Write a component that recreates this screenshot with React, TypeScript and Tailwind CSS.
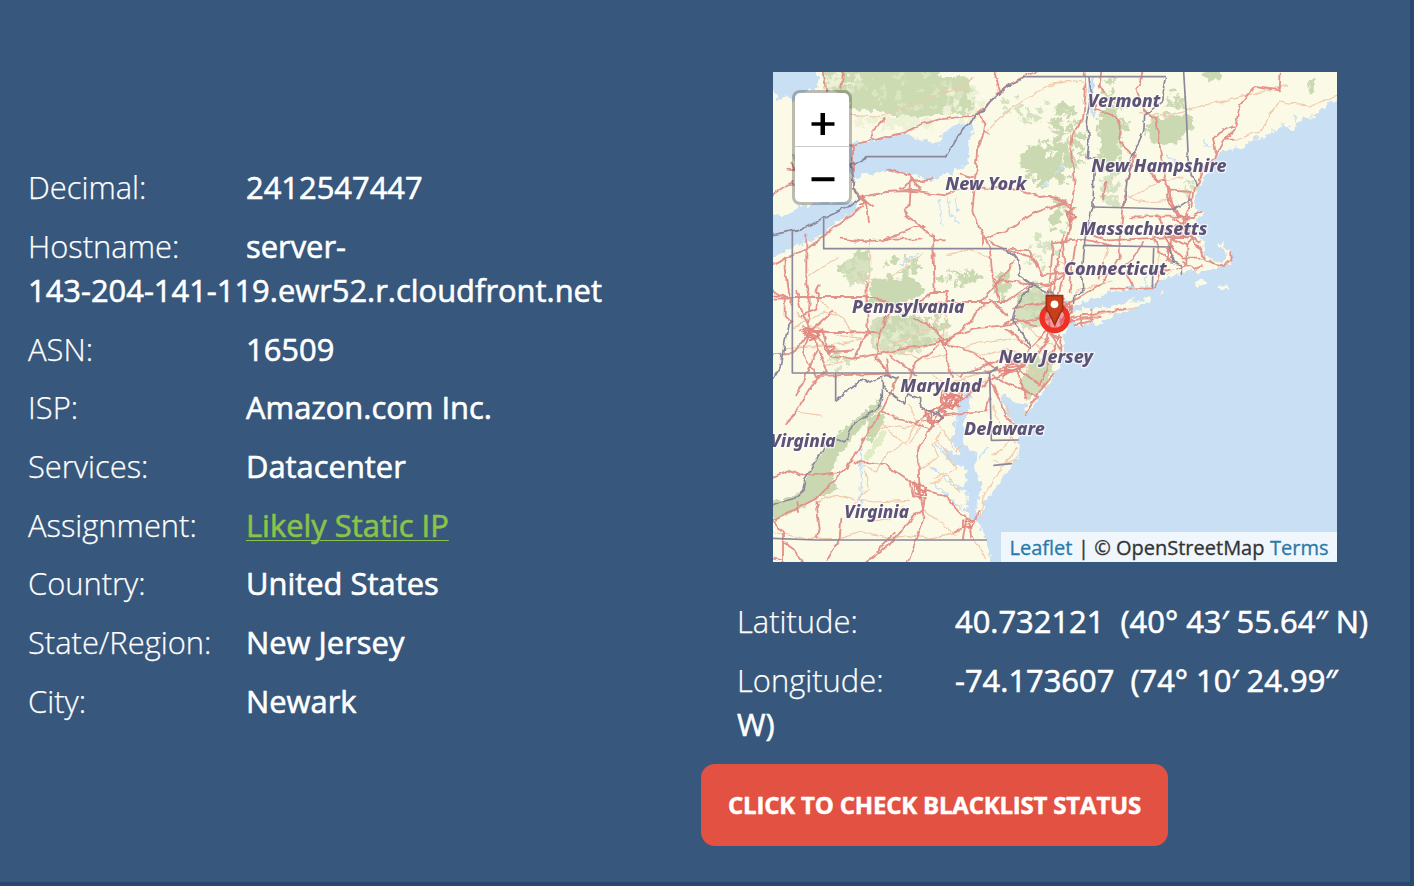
import React from "react";

const fields: { label: string; value: React.ReactNode }[] = [
  { label: "Decimal:", value: "2412547447" },
  {
    label: "Hostname:",
    value: (
      <>
        server-
        <br />
        143-204-141-119.ewr52.r.cloudfront.net
      </>
    ),
  },
  { label: "ASN:", value: "16509" },
  { label: "ISP:", value: "Amazon.com Inc." },
  { label: "Services:", value: "Datacenter" },
  {
    label: "Assignment:",
    value: (
      <a href="#" className="text-[#8bc34a] underline decoration-1 underline-offset-[3px]">
        Likely Static IP
      </a>
    ),
  },
  { label: "Country:", value: "United States" },
  { label: "State/Region:", value: "New Jersey" },
  { label: "City:", value: "Newark" },
];

const labels: [string, number, number, number][] = [
  ["Vermont", 944, 106, 218],
  ["New York", 517, 355, 243],
  ["New Hampshire", 955, 301, 406],
  ["Massachusetts", 921, 488, 382],
  ["Connecticut", 873, 608, 308],
  ["Pennsylvania", 237, 723, 338],
  ["New Jersey", 677, 872, 283],
  ["Maryland", 382, 959, 244],
  ["Delaware", 573, 1089, 243],
  ["Virginia", -8, 1124, 196],
  ["Virginia", 214, 1337, 194],
];

// Deterministic scatter of small woodland patches around a centre.
function scatter(cx: number, cy: number, rx: number, ry: number, n: number, seed: number) {
  let s = seed;
  const rnd = () => {
    s = (s * 16807) % 2147483647;
    return s / 2147483647;
  };
  let d = "";
  for (let i = 0; i < n; i++) {
    const a = rnd() * Math.PI * 2;
    const r = Math.sqrt(rnd());
    const x = Math.round(cx + Math.cos(a) * r * rx);
    const y = Math.round(cy + Math.sin(a) * r * ry);
    const w = Math.round(5 + rnd() * 16);
    const h = Math.round(4 + rnd() * 14);
    d += `M${x} ${y}l${w} ${-Math.round(h / 2)}l${Math.round(w / 2)} ${h}l${-w} ${Math.round(h / 2)}z`;
  }
  return d;
}

const woods = [
  scatter(820, 270, 75, 75, 75, 11),
  scatter(740, 90, 80, 60, 16, 5),
  scatter(870, 200, 55, 110, 65, 23),
  scatter(1005, 160, 38, 160, 85, 37),
  scatter(1000, 350, 30, 55, 28, 93),
  scatter(1180, 170, 70, 50, 40, 57),
  scatter(1200, 90, 30, 40, 15, 3),
  scatter(1240, 340, 40, 25, 12, 8),
  scatter(380, 585, 60, 35, 24, 71),
  scatter(545, 615, 60, 26, 26, 19),
  scatter(240, 590, 35, 40, 30, 13),
  scatter(410, 760, 110, 70, 70, 29),
  scatter(670, 640, 25, 40, 20, 41),
  scatter(790, 540, 60, 60, 20, 43),
  scatter(780, 680, 50, 50, 40, 47),
  scatter(800, 890, 35, 55, 35, 53),
  scatter(200, 860, 40, 40, 10, 59),
  scatter(850, 430, 30, 60, 22, 61),
  scatter(110, 260, 70, 80, 8, 67),
];

const clearings = [
  scatter(350, 150, 120, 22, 60, 101),
  scatter(560, 90, 60, 60, 30, 103),
  scatter(200, 30, 60, 30, 20, 107),
  scatter(380, 60, 170, 60, 40, 109),
  scatter(400, 790, 110, 50, 45, 113),
  scatter(780, 700, 45, 50, 20, 127),
];

function RegionMap() {
  return (
    <svg viewBox="0 0 1692 1470" className="block h-[490px] w-[564px]" aria-hidden="true">
      <defs>
        <filter id="soft" x="0" y="0" width="1" height="1">
          <feGaussianBlur stdDeviation="1.6" />
        </filter>
        <filter id="rough" x="0" y="0" width="1" height="1">
          <feTurbulence type="fractalNoise" baseFrequency="0.06" numOctaves="2" seed="4" />
          <feDisplacementMap in="SourceGraphic" scale="26" xChannelSelector="R" yChannelSelector="G" />
        </filter>
        <filter id="wiggle" x="0" y="0" width="1" height="1">
          <feTurbulence type="fractalNoise" baseFrequency="0.035" numOctaves="2" seed="9" />
          <feDisplacementMap in="SourceGraphic" scale="17" xChannelSelector="R" yChannelSelector="G" />
        </filter>
      </defs>
      <rect width="1692" height="1470" fill="#fbfae7" />

      <g filter="url(#soft)" strokeLinecap="round" strokeLinejoin="round">
        <g filter="url(#rough)">
          {/* Woodland */}
          <path fill="#cddbb3" d="M150-10H560L600 40L625 100L590 128L500 125L440 135L390 140L330 120L240 110L215 90L190 55L150 50z" />
          <path fill="#fbfae7" d="M500-10H640L610 15H500zM560-10L640-10L675 60L640 115L600 120L610 55z" />
          {clearings.slice(0, 4).map((d, i) => (
            <path key={i} d={d} fill={i === 3 ? "#dbe5c3" : "#edf1d6"} />
          ))}
          <path fill="#cad9b1" d="M195 580L230 560L255 535L285 540L287 625L245 630L195 600z" />
          <path fill="#cad9b1" d="M290 620H425L455 650L445 675L400 690L345 705L292 700z" />
          <path fill="#d5e0bf" d="M290 745L340 735L430 735L470 755L510 800L440 835L370 848L290 825z" />
          {clearings.slice(4).map((d, i) => (
            <path key={i} d={d} fill="#e6ecce" />
          ))}
          <path fill="#cad9b1" d="M1130 165L1180 135L1250 125L1265 145L1225 200L1175 220L1130 205z" />
          <path fill="#cad9b1" d="M980 120L1025 110L1040 160L1030 250L1000 290L985 210z" />
          <path fill="#cad9b1" d="M1295-10H1345V18L1310 28L1295 12zM1605 25L1625 22V65L1608 62z" />
          <path fill="#cad9b1" d="M740 245L795 215L830 260L868 230V300L805 338L790 300L740 290z" />
          <path fill="#d5e0be" d="M775 640L830 670L850 700L800 765L750 770L722 740L728 700z" />
          <path fill="#d2deba" d="M765 880L820 850L835 890L800 960L765 985L740 930z" />
          <path fill="#c9d8b0" d="M-10 1290L60 1275L90 1255L110 1190L150 1140L200 1080L245 1045L320 980L325 1010L285 1040L245 1090L195 1155L175 1200L190 1240L140 1275L80 1310L0 1345z" />
          <path fill="#c9d8b0" d="M285 1040L330 1020L335 1050L295 1110L280 1100zM150 1255L190 1235L200 1255L150 1275z" />
          <path fill="#e0ecc3" d="M270 1165L305 1100L340 1070L330 1110L285 1170z" />
          {woods.map((d, i) => (
            <path key={i} d={d} fill={i % 3 === 1 ? "#d6e2c1" : "#cad9b1"} />
          ))}

          {/* Great Lakes */}
          <path fill="#c9dff4" d="M-10-10H115L138 15L130 50L75 65L65 90L45 70L10 85L-10 30z" />
          <path fill="#c9dff4" d="M225 215L300 205L400 182L445 205L500 215L505 185L545 160L595 150L605 175L585 205L595 245L580 275L530 305L470 322L400 305L330 297L270 310L240 325L225 280z" />
          <path fill="#c9dff4" d="M-10 425L40 430L90 400L200 385L258 388L240 420L190 450L140 495L60 525L-10 560z" />

          {/* Atlantic coast with Delaware and Chesapeake bays */}
          <path
            fill="#c9dff4"
            d="M1710 78L1655 100L1630 130L1590 140L1560 172L1530 160L1495 185L1450 205L1400 228L1345 238L1325 260L1300 300L1275 345L1262 390L1275 412L1295 425L1270 445L1278 490L1290 520L1298 555L1340 575L1360 563L1365 540L1350 520L1340 518L1350 512L1372 540L1372 565L1350 582L1300 588L1280 602L1255 590L1235 605L1205 608L1170 620L1135 645L1070 648L1010 662L960 678L905 705L890 715L895 745L875 775L871 789L870 850L842 919L805 965L765 1020L750 1035L765 995L715 985L690 960L680 975L705 1030L738 1075L737 1125L733 1155L705 1200L670 1245L635 1290L625 1330L605 1330L618 1275L625 1230L605 1200L610 1150L575 1120L572 1050L590 1010L598 965L580 955L555 1000L552 1055L535 1105L560 1150L500 1135L535 1170L585 1190L575 1240L540 1240L585 1270L580 1310L555 1290L600 1345L625 1358L640 1410L655 1480H1710z"
          />
          <path fill="#fbfae7" d="M890 728L930 708L1050 700L1090 670L1070 695L1130 685L1080 710L1020 735L970 755L910 762zM1262 635L1290 622L1306 635L1275 642zM1340 645L1368 640L1370 653L1345 654zM1163 664L1172 660V670z" />
          <g fill="none" stroke="#fbfae7" strokeWidth="9">
            <path d="M1300 588L1345 582L1368 568L1368 545L1350 518L1338 516M890 725L960 715L1060 700L1130 683" />
          </g>
          <g fill="none" stroke="#c9dff4">
            <path strokeWidth="10" d="M957 20L950 80L960 130M890 690L850 720L865 760" />
            <path strokeWidth="5" d="M497 380L510 460M525 375L530 430L560 455M545 375L552 420M810 340L822 335M870 275L850 300M1290 210L1310 225M1180 250L1210 265M550 1020L545 1100M490 1120L570 1160M470 1180L560 1255M490 1240L570 1320M700 1360L680 1400M265 1130V1300M380 580L440 540M1530 150L1540 180M1565 130L1575 160M1500 175L1510 200M1450 195L1445 215M640 1130L620 1160M1120 590L1118 640" />
          </g>
        </g>

        {/* Secondary roads */}
        <g fill="none" stroke="#f1c9ab" strokeWidth="3.5" filter="url(#wiggle)">
          <path d="M235 130L310 135L390 110L490 70L585 40L600 15M645 175L700 120L790 60L870 25M831 35L890 25L930 30M1100 125L1200 130L1290 100L1430 70L1540 40M1692 70L1620 100L1520 90L1490 120L1475 170L1390 205M1070 375L1160 330L1230 315M1065 375L1120 390L1190 385M290 500V620L275 660L280 720M470 690L500 720L490 760L400 800L320 840M520 690L510 800L560 830L630 810L700 800L760 810M60 770L150 720L190 730M40 830L180 820L270 800M160 880L250 860L370 835L440 860L520 850M520 940L600 910L680 890M790 820L830 850L820 890M770 770L850 830" />
          <path d="M300 1080L350 1060L400 1070L455 1050M250 1170L310 1200L345 1140L400 1110L430 1050M275 1200L290 1250L240 1300M130 1290L190 1270L230 1280L300 1290L410 1285M0 1380L100 1400L200 1400L265 1380L350 1400L400 1390L480 1400L560 1375M440 1190L500 1150L480 1120L500 1080M480 1220L550 1190L490 1100M470 1240L520 1210L560 1260M450 1310L550 1390M625 1330L630 1270L680 1200L735 1120M660 1165L690 1180L730 1160M660 1000L680 1060L730 1110M500 1060L550 1140L565 1120M390 1300L350 1340L280 1350M70 1020L145 1030M590 1380L640 1460" />
          <path d="M110 610L170 570L195 560M230 640L280 600M350 620L400 580L450 540M520 550L590 530L650 560M850 560L900 600L960 610L1040 600L1130 600M905 660L960 640L1020 630M990 570L1010 520M1140 500L1160 540L1150 600M1180 610L1200 590M900 745L1000 725L1100 705M120 670L160 700L210 740L240 790M70 720L110 760L200 790L270 800M580 830L640 850L700 830L760 850M540 900L600 940L660 920M480 910L530 950L600 950M410 1000L440 1070L410 1110M330 1060L400 1120M820 950L790 900L750 880M700 1000L720 1080L690 1130L655 1150" />
        </g>

        {/* Main roads */}
        <g fill="none" stroke="#e2928a" strokeWidth="5.600" filter="url(#wiggle)">
          <path d="M152 0L160 60M210 0L205 50M800-5L760 12L715 35L680 60L645 95L625 115L605 130L500 142L450 155L390 183L300 205L235 218M665 0L680 55M625 115L615 125L637 155L632 185L612 235L605 340L598 420L630 490V520M640 178L650 184M295 180L298 200M295 178L335 138M0 370L35 345L65 330M40 340L65 338M40 290L65 292M55 275L65 290" />
          <path d="M240 215V350L265 375L340 360L395 357L520 370L570 350L690 345L760 360L800 375L830 372L870 390L780 425L720 465L640 500M345 296L380 300L415 310L410 400L395 410L400 430L440 460L485 505H520M408 305L440 355L380 350L420 330L475 320M415 325L440 345M265 370L280 400L285 450M260 375L300 405M270 400L235 430L150 495L105 528L30 565L0 575M330 500L370 490L430 465H455M200 500L270 508L320 505L350 500L440 500M560 305L600 315" />
          <path d="M935 0L938 60L930 140L895 190L892 230L905 320L897 400L895 440L882 510M895 400L850 376H831M895 410L870 395L835 410M882 430L905 410M985 0L980 40L990 60M968 80L965 110L1020 130L1045 150L1038 210L1070 240L1085 255M1105 0L1100 40L1090 50L1110 110L1120 120M1085 250L1065 310L1055 370L1050 420L1040 500L1040 560M1110 115L1150 140L1158 210L1165 260L1180 330L1205 420M1130 300L1160 330L1180 325L1185 390L1215 430M1255 405L1262 350L1280 330L1290 290L1330 250L1355 205L1385 170L1400 100L1445 45L1520 55L1523 0M1330 250L1320 200L1340 180L1380 160M1355 203H1385M1185 355L1250 360L1245 410M990 380L1000 330" />
          <path d="M1075 433H1150L1260 435L1285 420M960 492L1010 505L1100 500L1200 495L1250 495L1280 510M1180 370L1215 420L1240 450L1260 500L1240 520M1245 400L1240 460L1260 490M1150 430L1180 480L1210 510M1200 410L1235 440L1225 490M895 420L890 460L880 510M840 515L920 500L1015 520M840 510L830 640L820 700M870 510L875 590L855 680M910 500L895 600L890 660M1035 560L1010 600L990 630L930 670L880 700M1110 510L1080 560L1030 600M990 570L980 620M1010 650H1070L1150 645L1160 600L1190 590M1060 600L1080 640M1140 490L1160 540L1195 570M1180 550L1200 500L1240 520L1240 580L1210 590M1275 520L1300 565L1350 582L1372 565L1372 540M1230 570L1270 590L1290 580M1190 520L1230 560L1295 560M1200 490L1250 490L1290 550" />
          <path d="M895 735L1000 720L1060 710M890 745L980 735M905 760L960 745M925 730V765M955 710V750M0 670L40 675L300 675L330 690L380 695L430 700L520 690L525 660L470 660L440 690M520 690H700L770 640M100 490V640L110 680L105 790M35 560V590L45 660L60 700M0 655L35 680V730L55 750M0 680H45M70 660L80 700L115 785L150 810L170 850L240 860L370 835L500 810L600 770L690 760L800 740L830 740M80 730L130 710L135 660M110 780L90 840L130 920M0 850L60 845L110 780L180 715M120 780H230L320 785M150 770L170 840L240 835M120 800L165 900L130 920L80 1000L40 1060M130 835L95 920L70 970M280 630L285 780L245 855M320 785L310 860L350 910M350 850L430 910M320 785Q330 740 370 710M510 810L540 915M500 820L430 870L410 920M340 860L345 905L130 912M420 740L480 765L510 800M130 660L140 640M480 490L485 660M630 490L650 530L660 620L680 690M650 510L720 540L780 560L810 610L870 600M710 530L770 535L790 590M620 690L680 625L830 640L870 605M680 625L720 570M640 690L600 740L550 790L510 810M690 760L720 740L790 760M720 710L820 690L850 700M650 680L700 730M700 770L770 830L820 780L860 800" />
          <path d="M870 490L850 600L835 690L825 800L790 850L730 890L660 920L600 960L540 1000M850 740L840 790L865 800V850M860 790L835 850L800 940L750 900L720 870M640 900L740 880L770 830M660 910L720 940L790 970L840 910M730 890L760 980M560 910L640 880L710 850M520 815L600 840L680 900M900 700L870 750M830 780L860 830M800 960L755 1029M650 920L700 1030L730 1060" />
          <path d="M540 980L500 1020L470 1070L435 1130L440 1260L455 1330L430 1400L405 1470M470 1070L410 1050L330 1020M375 915L330 1010L295 1060L240 1160L190 1220L130 1280L70 1310L0 1345M245 1168L340 1180L420 1235L450 1255L520 1270L560 1320L600 1350M410 1235L420 1270L455 1280L450 1310M450 1310L380 1380L345 1420L320 1440L280 1470M540 1380L600 1350L620 1320M0 1215L45 1195L80 1210L120 1210L200 1200M0 1345L30 1380V1470M70 1290L75 1320M30 1410L60 1430L90 1470M0 1460L30 1465M130 1290L140 1370L135 1400M205 1340L200 1400L165 1460M365 1380L310 1440M590 1360L595 1395M485 1015L430 1050M510 1030L640 1015L650 980M580 1340L570 1400" />
        </g>

        {/* Urban street knots */}
        <g fill="none" stroke="#e2877f" strokeWidth="5" filter="url(#wiggle)">
          <path d="M420 1230L455 1240L460 1270L425 1265zM430 1235L440 1275L460 1250M470 1020L510 1030L500 1050L475 1045zM500 980L570 960L555 1000L520 1000zM510 970L540 1010L565 975L535 965L500 1010M570 1345L605 1350L595 1370L570 1365zM1185 530L1200 555L1180 565zM700 880L750 870L740 900L700 900L720 860M90 780L150 775L120 800zM500 800L520 820L530 800M265 370L280 390L260 395M880 420L910 435L890 450zM845 720L890 690L900 720L860 750L885 710M520 985L550 970M525 1010L545 975M660 620L675 630L665 640M1215 430L1245 440L1220 460L1240 480" />
          <path d="M505 960L555 985L535 1015L500 990zM515 975L560 970L545 1000L510 1015L530 960L560 1000M455 1030L490 1010L520 1020L495 1055L450 1045M450 1010L480 1060M870 690L895 710L880 730L900 745L870 760M855 700L880 705M80 775L115 770L140 790L110 805M90 765L125 800M160 820L185 830L165 840M680 900L740 890L770 865M700 890L690 915M425 1245L455 1255M440 1230V1280M1200 440L1225 455L1210 480L1240 500M1190 460L1250 470M1170 480L1200 530" />
        </g>

        {/* State and national borders */}
        <g fill="none" stroke="#8c879b" strokeWidth="5">
          <path d="M760 14H1177M280 254H518M58 475V903H650L655 1105L735 1104M152 440V530H700M0 1399L130 1404H640M663 1180L715 1175M188 905V985M960 405L1090 408L1205 412M935 520L1190 525M1142 530L1138 645M1232 0L1240 130L1245 240" />
          <g filter="url(#wiggle)">
            <path d="M0 488L90 470L150 440L225 405L260 380L240 350L242 320L232 280L280 254M518 254L550 200L570 170L598 145L605 130L630 118L650 90L700 45L760 14M1177 14L1172 45L1170 85L1115 130L1112 180L1090 230L1073 255L1060 370L1050 400M700 530L735 570L740 610L778 638L870 680M778 638L730 700L718 745L765 810L775 830M188 985L240 945L275 920L290 930L340 910L375 920M328 915V985M330 945L395 995L405 965L440 980V1005L480 1025M0 922L20 890L45 760L60 750M325 970L315 1010L245 1050L215 1110L195 1100M160 1110L130 1170L95 1225L90 1255L60 1280L0 1300M480 1030L500 1020L510 1035L500 1050M645 905L670 885" />
            <path d="M947 15L955 60L940 150L948 210L942 260L965 255L960 390V405M1205 412L1255 380M1245 240L1255 310L1275 340M960 405L935 505V520M1190 525L1200 570L1225 580V610M932 520L925 600L930 660L905 670L905 695" />
          </g>
        </g>
      </g>

      {/* Place names */}
      <g
        fontFamily="'Noto Sans', 'Open Sans', sans-serif"
        fontSize="52"
        fontWeight="800"
        fontStyle="italic"
        fill="#5d5277"
        stroke="#ffffff"
        strokeOpacity="0.65"
        strokeWidth="8"
        strokeLinejoin="round"
        paintOrder="stroke"
        filter="url(#soft)"
      >
        {labels.map(([name, x, y, w]) => (
          <text key={`${name}${x}`} x={x} y={y} textLength={w} lengthAdjust="spacingAndGlyphs">
            {name}
          </text>
        ))}
      </g>

      {/* Position marker */}
      <circle cx="845" cy="738" r="38" fill="#e8304a" fillOpacity="0.45" stroke="#ee3124" strokeWidth="16" />
      <path d="M820 671H869V713L861 724L845 758L829 724L820 713z" fill="#c8401b" stroke="#a12f17" strokeWidth="5" strokeLinejoin="round" />
      <circle cx="844.500" cy="697" r="11.500" fill="#fff" />
    </svg>
  );
}

export default function App() {
  return (
    <main className="flex h-[886px] w-[1414px] overflow-hidden border-b-4 border-r-4 border-[#29476f] bg-[#37587c] font-['Open_Sans',sans-serif] text-[30.9px] leading-[44px] text-white">
      <section className="w-[701px] shrink-0 pl-7 pt-[165.3px]">
        <dl className="flex flex-col gap-[14.7px]">
          {fields.map((f) => (
            <div key={f.label}>
              <dt className="inline-block w-[218px] font-light [-webkit-text-stroke:0.25px]">{f.label}</dt>
              <dd className="inline font-medium [-webkit-text-stroke:0.6px]">{f.value}</dd>
            </div>
          ))}
        </dl>
      </section>

      <section className="flex flex-1 flex-col items-start pt-[72px]">
        <div className="relative ml-[72px] h-[490px] w-[564px] overflow-hidden">
          <RegionMap />
          <div className="absolute left-[19px] top-[18px] flex w-[60px] flex-col overflow-hidden rounded-[8px] border-[3px] border-black/25 bg-white bg-clip-padding text-black">
            <button aria-label="Zoom in" className="flex h-[54px] items-center justify-center border-b border-[#ccc]">
              <svg viewBox="0 0 24 24" className="ml-0.5 mt-2 h-6 w-6" fill="currentColor">
                <path d="M.5 10.200h9V1h4.500v9.200h9.500v3.600H14V23H9.500v-9.200h-9z" />
              </svg>
            </button>
            <button aria-label="Zoom out" className="flex h-[55px] items-center justify-center">
              <svg viewBox="0 0 24 24" className="ml-0.5 mt-2 h-6 w-6" fill="currentColor">
                <path d="M.5 10.200h23v4H.5z" />
              </svg>
            </button>
          </div>
          <div className="absolute bottom-0 right-0 flex h-[30px] w-[336px] items-center justify-center gap-[5.500px] whitespace-nowrap bg-white/70 pt-0.5 text-[20px] leading-[30px] text-[#333] [-webkit-text-stroke:0.3px]">
            <a href="#" className="text-[#2a7aa8]">Leaflet</a>
            <span>| © OpenStreetMap</span>
            <a href="#" className="text-[#2a7aa8]">Terms</a>
          </div>
        </div>

        <dl className="ml-9 mt-[37px] flex w-[650px] flex-col gap-[15px]">
          <div>
            <dt className="inline-block w-[218px] font-light [-webkit-text-stroke:0.25px]">Latitude:</dt>
            <dd className="inline font-medium [-webkit-text-stroke:0.6px]">40.732121&nbsp; (40° 43′ 55.64″ N)</dd>
          </div>
          <div>
            <dt className="inline-block w-[218px] font-light [-webkit-text-stroke:0.25px]">Longitude:</dt>
            <dd className="inline font-medium [-webkit-text-stroke:0.6px]">
              -74.173607&nbsp; (74° 10′ 24.99″
              <br />
              W)
            </dd>
          </div>
        </dl>

        <button className="mt-[18px] h-[82px] w-[467px] whitespace-nowrap rounded-[14px] bg-[#e25141] text-[24px] font-bold leading-[82px] tracking-[-0.2px] [-webkit-text-stroke:0.5px]">
          CLICK TO CHECK BLACKLIST STATUS
        </button>
      </section>
    </main>
  );
}
